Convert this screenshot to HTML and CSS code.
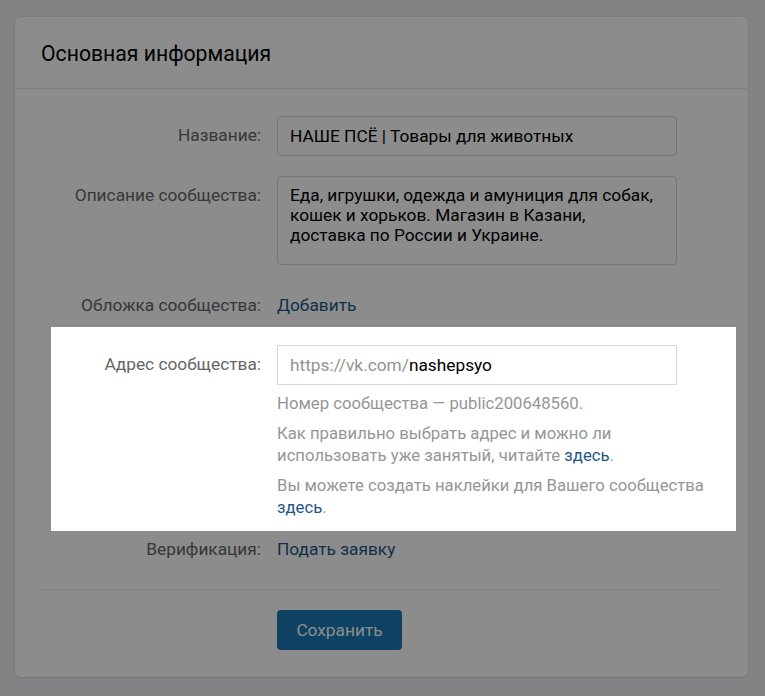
FILE: index.html
```html
<!DOCTYPE html>
<html lang="ru">
<head>
<meta charset="utf-8">
<title>Основная информация</title>
<link rel="stylesheet" href="styles.css">
</head>
<body>
<div class="card">
  <div class="card-header">Основная информация</div>
  <div class="card-body">
    <div class="row row-name">
      <div class="label label-field">Название:</div>
      <div class="field">
        <div class="input">НАШЕ ПСЁ | Товары для животных</div>
      </div>
    </div>
    <div class="row row-desc">
      <div class="label label-field">Описание сообщества:</div>
      <div class="field">
        <div class="textarea">Еда, игрушки, одежда и амуниция для собак,<br>кошек и хорьков. Магазин в Казани,<br>доставка по России и Украине.</div>
      </div>
    </div>
    <div class="row row-cover">
      <div class="label">Обложка сообщества:</div>
      <div class="field"><a class="link" href="#">Добавить</a></div>
    </div>
    <div class="highlight">
      <div class="row">
        <div class="label label-field label-hl">Адрес сообщества:</div>
        <div class="field field-wide">
          <div class="input input-addr"><span class="prefix">https://vk.com/</span>nashepsyo</div>
          <p class="hint hint-first">Номер сообщества — public200648560.</p>
          <p class="hint">Как правильно выбрать адрес и можно ли<br>использовать уже занятый, читайте <a class="link" href="#">здесь</a>.</p>
          <p class="hint">Вы можете создать наклейки для Вашего сообщества<br><a class="link" href="#">здесь</a>.</p>
        </div>
      </div>
    </div>
    <div class="row row-verify">
      <div class="label">Верификация:</div>
      <div class="field"><a class="link" href="#">Подать заявку</a></div>
    </div>
    <div class="divider"></div>
    <div class="row">
      <div class="label"></div>
      <div class="field"><button class="btn" type="button">Сохранить</button></div>
    </div>
  </div>
</div>
</body>
</html>
```

FILE: styles.css
```css
html, body {
  margin: 0;
  padding: 0;
}
html {
  background: #edeef0;
  height: 100%;
}
body {
  box-sizing: border-box;
  min-height: 100%;
  font-family: Roboto, "Noto Sans", "DejaVu Sans", sans-serif;
  font-size: 17.3px;
  color: #000;
  padding: 17px 17px 0 15px;
}
.card {
  width: 733px;
  background: #fff;
  border-radius: 6px;
  box-shadow: 0 1px 0 0 #d7d8db, 0 0 0 1px #e3e4e8;
}
.card-header {
  height: 72px;
  box-sizing: border-box;
  padding: 1px 26px 0;
  display: flex;
  align-items: center;
  font-size: 21.2px;
  border-bottom: 1px solid #e7e8ec;
}
.card-body {
  padding: 27px 0 27px 0;
}
.row {
  display: flex;
  gap: 16px;
  line-height: 20px;
}
.label {
  width: 246px;
  flex: none;
  text-align: right;
  color: #666;
}
.label-field {
  padding-top: 9px;
}
.label-hl {
  width: 210px;
}
.field {
  width: 400px;
  flex: none;
}
.field-wide {
  width: 450px;
}
.input {
  box-sizing: border-box;
  height: 40px;
  border: 1px solid #d3d9de;
  border-radius: 4px;
  padding: 9px 12px;
  line-height: 20px;
  width: 400px;
  background: #fff;
}
.input-addr {
  border-radius: 0;
}
.prefix {
  color: #939393;
}
.textarea {
  box-sizing: border-box;
  height: 89px;
  border: 1px solid #d3d9de;
  border-radius: 4px;
  padding: 8px 12px;
  line-height: 20px;
  width: 400px;
}
.row-name {
  margin-bottom: 20px;
}
.row-desc {
  margin-bottom: 30px;
}
.row-cover {
  margin-bottom: 12px;
}
.link {
  color: #1d5889;
  text-decoration: none;
}
.highlight {
  position: relative;
  z-index: 1;
  background: #fff;
  margin: 0 12px 0 36px;
  padding: 18px 0 12px;
  box-shadow: 0 0 0 3000px rgba(0, 0, 0, 0.45);
}
.hint {
  margin: 8px 0 0;
  color: #969696;
  font-size: 16.7px;
  line-height: 22px;
  white-space: nowrap;
}
.hint-first {
  margin-top: 8px;
}
.row-verify {
  margin-top: 8px;
}
.divider {
  height: 1px;
  background: #e7e8ec;
  margin: 30px 28px 20px 26px;
}
.btn {
  width: 125px;
  height: 40px;
  border: 0;
  border-radius: 4px;
  background: #1a78b2;
  color: #fff;
  font-family: inherit;
  font-size: 17.3px;
  padding: 0;
}
```
